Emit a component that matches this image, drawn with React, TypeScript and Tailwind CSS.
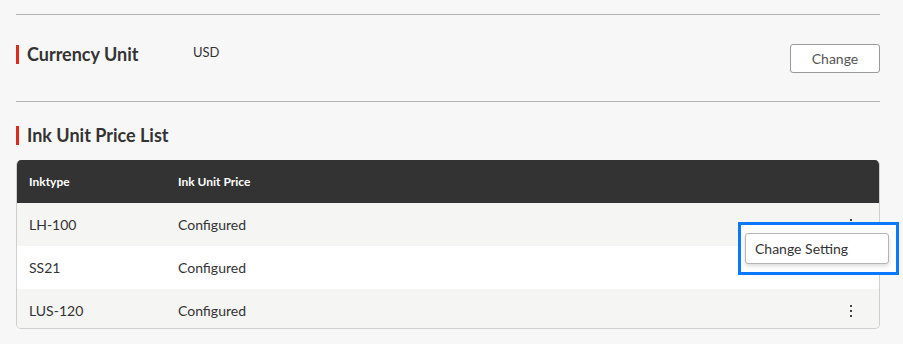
const rows = [
  { type: "LH-100", price: "Configured", bg: "bg-[#f5f5f4]", h: "h-[43px]" },
  { type: "SS21", price: "Configured", bg: "bg-white", h: "h-[43px]" },
  { type: "LUS-120", price: "Configured", bg: "bg-[#f5f5f4]", h: "h-[39px] pt-[4px]" },
];

function Kebab() {
  return (
    <div className="flex flex-col items-center gap-[3px]">
      <span className="block h-[2px] w-[2px] bg-[#444]" />
      <span className="block h-[2px] w-[2px] bg-[#444]" />
      <span className="block h-[2px] w-[2px] bg-[#444]" />
    </div>
  );
}

function SectionTitle({ children }: { children: string }) {
  return (
    <div className="flex items-center gap-[8px]">
      <span className="block h-[19px] w-[3px] bg-[#e02a1c]" />
      <h2 className="relative -top-[1px] text-[18px] font-bold leading-none text-[#333]">{children}</h2>
    </div>
  );
}

export default function App() {
  return (
    <div
      className="relative h-[344px] w-[903px] bg-[#f7f7f7] pl-4 pr-[23px] pt-[14px] text-[#333]"
      style={{ fontFamily: "Lato, 'Noto Sans', sans-serif" }}
    >
      <div className="border-t border-[#b3b3b3]" />

      <div className="flex items-start pt-[29px] pb-[28px]">
        <div className="mt-[1px] w-[177px]">
          <SectionTitle>Currency Unit</SectionTitle>
        </div>
        <span className="text-[13px] leading-[16px] text-[#333]">USD</span>
        <button className="ml-auto h-[29px] w-[90px] rounded-[3px] border border-[#9a9a9a] bg-white pb-[1px] text-[14px] text-[#555]">
          Change
        </button>
      </div>

      <div className="border-t border-[#b3b3b3]" />

      <div className="pt-[24px] pb-[15px]">
        <SectionTitle>Ink Unit Price List</SectionTitle>
      </div>

      <div className="overflow-hidden rounded-[5px] border-x border-b border-[#cfcfcf]">
        <div className="flex h-[43px] items-center bg-[#333] text-[12px] font-bold text-white">
          <span className="w-[161px] pl-[12px]">Inktype</span>
          <span>Ink Unit Price</span>
        </div>
        {rows.map((r) => (
          <div key={r.type} className={`flex items-center text-[14px] text-[#333] ${r.bg} ${r.h}`}>
            <span className="w-[161px] pl-[12px]">{r.type}</span>
            <span>{r.price}</span>
            <div className="ml-auto mr-[27px]">
              <Kebab />
            </div>
          </div>
        ))}
      </div>

      <div className="absolute left-[738px] top-[222px] flex h-[53px] w-[161px] items-center border-[3px] border-[#0a78ff] bg-white pl-[4px]">
        <button className="flex h-[31px] w-[144px] items-center rounded-[3px] border border-[#b5b5b5] bg-white pl-[9px] text-[14px] text-[#333] shadow-[0_2px_4px_rgba(0,0,0,0.15)]">
          Change Setting
        </button>
      </div>
    </div>
  );
}
